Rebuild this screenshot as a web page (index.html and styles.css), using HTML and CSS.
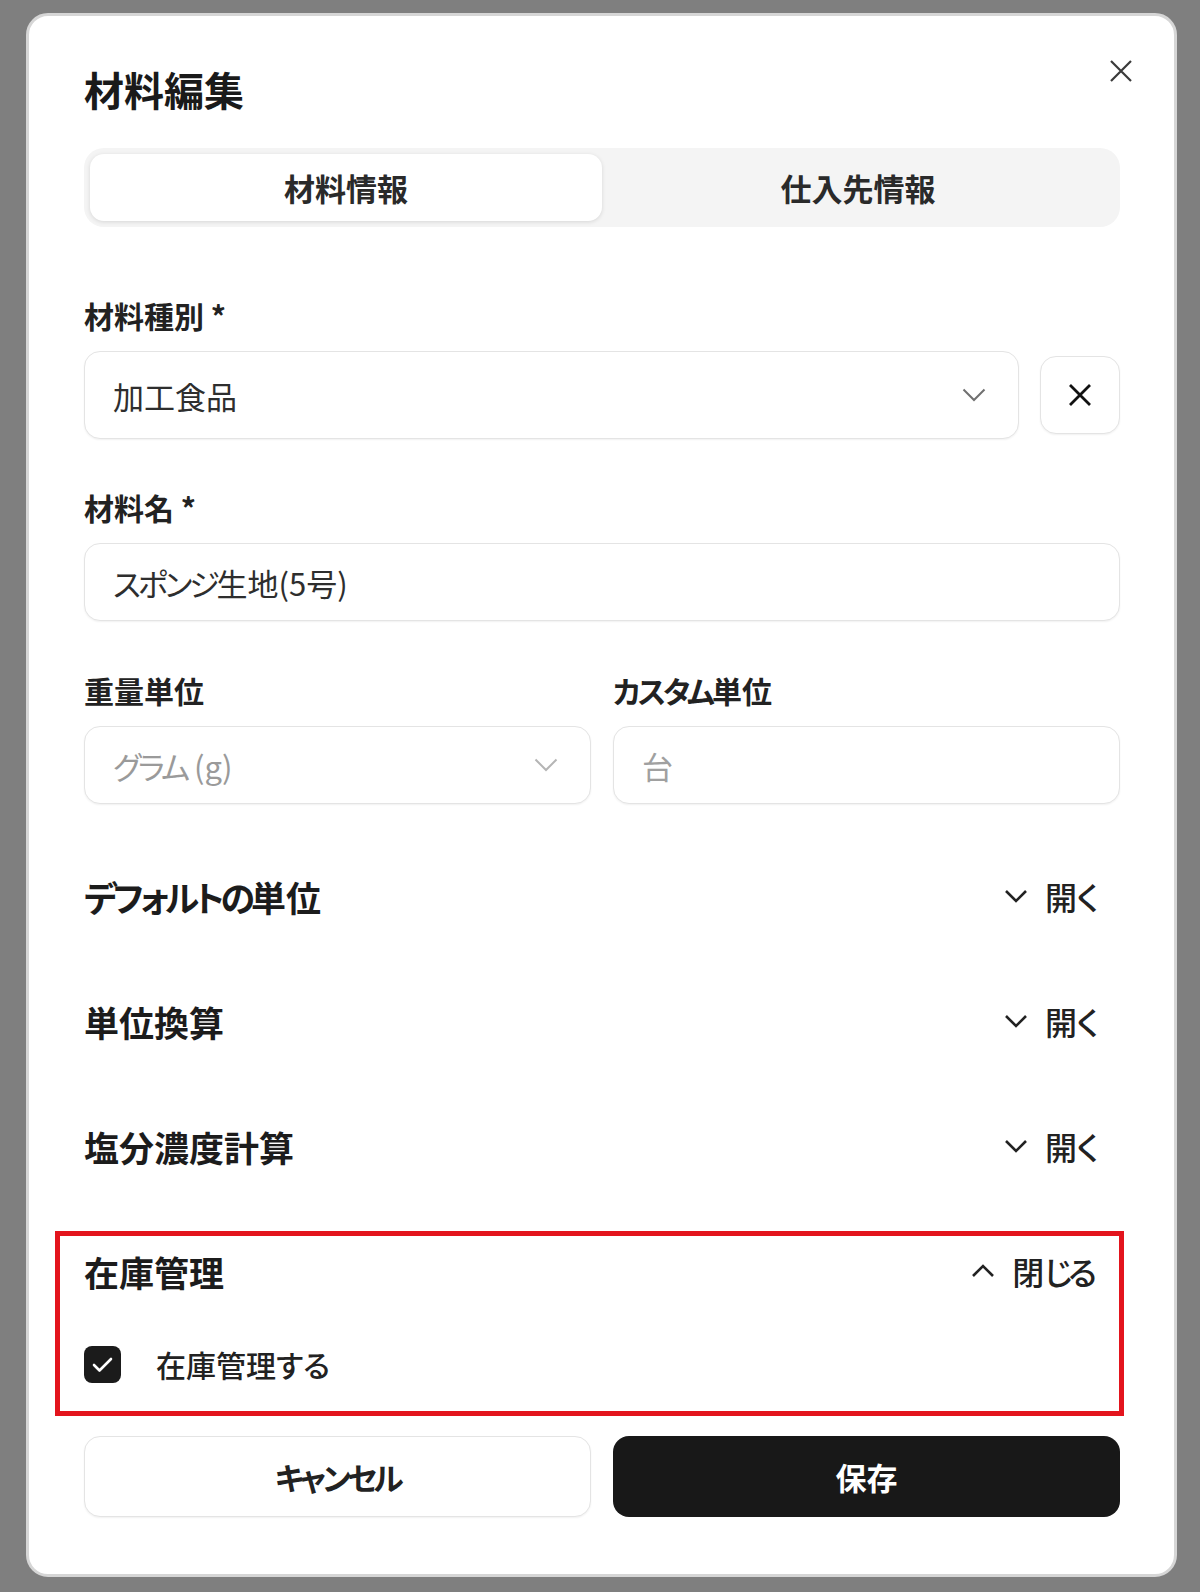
FILE: index.html
```html
<!DOCTYPE html>
<html lang="ja">
<head>
<meta charset="utf-8">
<title>材料編集</title>
<link rel="stylesheet" href="styles.css">
</head>
<body>
<div class="dialog">
  <button class="close" aria-label="閉じる">
    <svg width="22" height="22" viewBox="0 0 22 22"><path d="M1 1L21 21M21 1L1 21"/></svg>
  </button>
  <h1 class="title">材料編集</h1>

  <div class="tabs">
    <div class="tab active">材料情報</div>
    <div class="tab">仕入先情報</div>
  </div>

  <div class="field first">
    <div class="label">材料種別 *</div>
    <div class="select-row">
      <div class="control select">
        <span class="value">加工食品</span>
        <svg class="chev" width="24" height="14" viewBox="0 0 24 14"><path d="M1.5 1.5L12 12L22.5 1.5"/></svg>
      </div>
      <button class="clear" aria-label="クリア">
        <svg width="24" height="24" viewBox="0 0 24 24"><path d="M2 2L22 22M22 2L2 22"/></svg>
      </button>
    </div>
  </div>

  <div class="field">
    <div class="label">材料名 *</div>
    <div class="control input">
      <span class="value"><span class="kana k3">スポンジ</span>生地(5号)</span>
    </div>
  </div>

  <div class="field two">
    <div class="col">
      <div class="label">重量単位</div>
      <div class="control select disabled">
        <span class="value muted"><span class="kana k3">グラム</span> (g)</span>
        <svg class="chev light" width="24" height="14" viewBox="0 0 24 14"><path d="M1.5 1.5L12 12L22.5 1.5"/></svg>
      </div>
    </div>
    <div class="col">
      <div class="label"><span class="kana k3">カスタム</span>単位</div>
      <div class="control input">
        <span class="value placeholder">台</span>
      </div>
    </div>
  </div>

  <div class="section">
    <div class="section-head">
      <span class="section-title"><span class="kana k4">デフォルトの</span>単位</span>
      <span class="toggle"><svg width="24" height="14" viewBox="0 0 24 14"><path d="M2 2L12 12L22 2"/></svg>開く</span>
    </div>
  </div>

  <div class="section">
    <div class="section-head">
      <span class="section-title">単位換算</span>
      <span class="toggle"><svg width="24" height="14" viewBox="0 0 24 14"><path d="M2 2L12 12L22 2"/></svg>開く</span>
    </div>
  </div>

  <div class="section">
    <div class="section-head">
      <span class="section-title">塩分濃度計算</span>
      <span class="toggle"><svg width="24" height="14" viewBox="0 0 24 14"><path d="M2 2L12 12L22 2"/></svg>開く</span>
    </div>
  </div>

  <div class="section highlight">
    <div class="section-head">
      <span class="section-title">在庫管理</span>
      <span class="toggle close-toggle"><svg width="24" height="14" viewBox="0 0 24 14"><path d="M2 12L12 2L22 12"/></svg><span>閉<span class="kana k4">じ</span>る</span></span>
    </div>
    <label class="check-row">
      <span class="checkbox">
        <svg width="37" height="37" viewBox="0 0 37 37"><path d="M10 19l5.5 5.5L27 13"/></svg>
      </span>
      <span class="check-text">在庫管理する</span>
    </label>
  </div>

  <div class="actions">
    <button class="btn secondary"><span class="kana k35">キャンセル</span></button>
    <button class="btn primary">保存</button>
  </div>
</div>
</body>
</html>
```

FILE: styles.css
```css
* { box-sizing: border-box; }

html, body {
  margin: 0;
  padding: 0;
}

body {
  width: 1200px;
  height: 1592px;
  background: #7f7f7f;
  font-family: "Noto Sans CJK JP", "Noto Sans", sans-serif;
  font-feature-settings: "palt";
  color: #1c1c1c;
  overflow: hidden;
  padding-top: 13px;
  padding-left: 26px;
}

.kana.k3 { letter-spacing: -3px; }
.kana.k35 { letter-spacing: -3.5px; }
.kana.k4 { letter-spacing: -4px; }
.kana.k5 { letter-spacing: -5px; }

.dialog {
  position: relative;
  width: 1151px;
  height: 1564px;
  background: #ffffff;
  border: 3px solid #d6d6d6;
  border-radius: 22px;
  padding: 49px 54px 0 55px;
}

.close {
  position: absolute;
  top: 44px;
  right: 42px;
  width: 22px;
  height: 22px;
  padding: 0;
  border: 0;
  background: none;
  display: block;
}
.close svg { display: block; }
.close path { stroke: #3a3a3a; stroke-width: 2.2; fill: none; }

.title {
  margin: 0;
  font-size: 40px;
  line-height: 48px;
  font-weight: 700;
  color: #1a1a1a;
}

.tabs {
  margin-top: 35px;
  height: 79px;
  background: #f4f4f4;
  border-radius: 20px;
  padding: 6px;
  display: flex;
}
.tab {
  flex: 1;
  display: flex;
  align-items: center;
  justify-content: center;
  font-size: 31px;
  font-weight: 700;
  color: #2a2a2a;
  border-radius: 14px;
}
.tab.active {
  background: #ffffff;
  box-shadow: 0 1px 4px rgba(0,0,0,0.12);
}

.field { margin-top: 48px; }
.field.first { margin-top: 68px; }

.label {
  font-size: 30px;
  line-height: 40px;
  font-weight: 700;
  color: #222;
  margin-bottom: 16px;
}

.select-row {
  display: flex;
  align-items: center;
  gap: 21px;
}

.control {
  height: 78px;
  border: 1.5px solid #e4e4e4;
  border-radius: 16px;
  background: #fff;
  box-shadow: 0 1px 2px rgba(0,0,0,0.06);
  display: flex;
  align-items: center;
  padding: 0 28px;
}
.select-row .control {
  flex: 1;
  height: 88px;
}
.select { justify-content: space-between; }

.value {
  font-size: 31px;
  color: #2e2e2e;
}
.value.muted { color: #9a9a9a; }
.value.placeholder { color: #a0a0a0; }

.chev { display: block; margin-right: 4px; }
.chev path { stroke: #707070; stroke-width: 2; fill: none; }
.chev.light path { stroke: #b5b5b5; }

.clear {
  width: 80px;
  height: 78px;
  border: 1.5px solid #e4e4e4;
  border-radius: 16px;
  background: #fff;
  box-shadow: 0 1px 2px rgba(0,0,0,0.06);
  display: flex;
  align-items: center;
  justify-content: center;
  padding: 0;
}
.clear svg { display: block; }
.clear path { stroke: #111; stroke-width: 2.8; fill: none; }

.field.two {
  display: grid;
  grid-template-columns: 1fr 1fr;
  column-gap: 22px;
  margin-top: 49px;
}

.section { margin-top: 62px; }
.section + .section { margin-top: 65px; }

.section-head {
  height: 60px;
  display: flex;
  align-items: center;
  justify-content: space-between;
  padding-right: 21px;
}
.section-title {
  font-size: 35px;
  font-weight: 700;
  color: #1c1c1c;
}
.toggle {
  display: flex;
  align-items: center;
  gap: 17px;
  font-size: 32px;
  font-weight: 500;
  color: #222;
}
.close-toggle { margin-right: 2px; }
.toggle svg { display: block; }
.toggle path { stroke: #222; stroke-width: 2.6; fill: none; }

.highlight { position: relative; }
.highlight::after {
  content: "";
  position: absolute;
  top: -10px;
  bottom: -30px;
  left: -29px;
  right: -4px;
  border: 5px solid #e3141d;
  pointer-events: none;
}

.check-row {
  margin-top: 41px;
  display: flex;
  align-items: center;
  gap: 35px;
}
.checkbox {
  width: 37px;
  height: 37px;
  border-radius: 8px;
  background: #1b1b1b;
  display: block;
}
.checkbox svg { display: block; }
.checkbox path { stroke: #fff; stroke-width: 2.6; fill: none; stroke-linecap: round; stroke-linejoin: round; }
.check-text {
  font-size: 30px;
  font-weight: 500;
  color: #222;
}

.actions {
  margin-top: 50px;
  display: grid;
  grid-template-columns: 1fr 1fr;
  column-gap: 22px;
}
.btn {
  height: 81px;
  border-radius: 16px;
  font-family: inherit;
  font-feature-settings: "palt";
  font-size: 31px;
  font-weight: 700;
}
.btn.secondary {
  background: #fff;
  border: 1.5px solid #e4e4e4;
  color: #222;
  box-shadow: 0 1px 2px rgba(0,0,0,0.06);
}
.btn.primary {
  background: #181818;
  border: 0;
  color: #fff;
}
```
